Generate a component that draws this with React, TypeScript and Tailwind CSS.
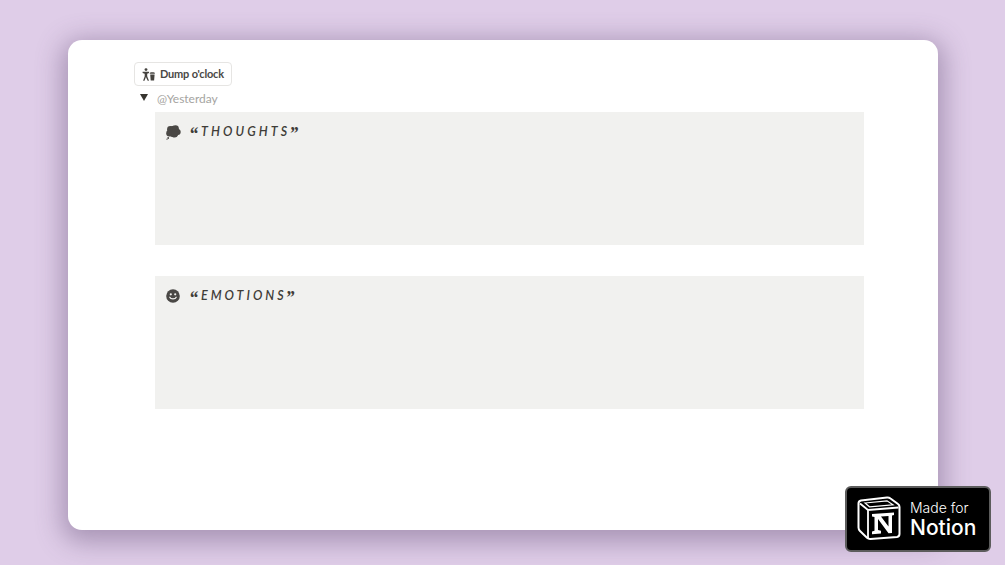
export default function App() {
  return (
    <div className="w-[1005px] h-[565px] overflow-hidden bg-[#dfcde8] relative pt-10 pl-[68px]">
      <div className="w-[870px] h-[490px] bg-white rounded-[14px] shadow-[0_6px_26px_6px_rgba(90,70,110,0.42)] pt-[22px] pl-[66px] font-['Lato',sans-serif]">
        <div className="w-[98px] h-[24px] border border-[#e6e5e3] rounded-[4px] flex items-center pl-[7px] gap-[4px]">
          <svg width="14" height="13" viewBox="0 0 14 13" fill="#45433f">
            <circle cx="4" cy="1.600" r="1.400" />
            <path d="M.6 3.800h6.400v1.200L5.200 5.700v2.500L7 12.800H5.700L3.900 9 2.500 12.800H1.100L2.700 8.200V5.700L.6 5z" />
            <path d="M7.800 4.800l1.400-.6h2.200l1.400.6v1H7.800zM8.200 6.500h4.400l-.5 6H8.700z" />
          </svg>
          <span className="text-[11px] font-bold text-[#4a4845] leading-none -mt-px tracking-[-0.2px] whitespace-nowrap">Dump o'clock</span>
        </div>
        <div className="flex items-center h-[26px] pl-[6px]">
          <svg width="8" height="7" viewBox="0 0 8 7" fill="#37352f" className="-mt-[3px]"><path d="M0 0h8L4 7z" /></svg>
          <span className="ml-[9px] -mt-px text-[12px] text-[#a5a4a1] leading-none">@Yesterday</span>
        </div>
        <div className="ml-[21px] w-[709px] flex flex-col gap-[30px]">
          <Callout title="THOUGHTS" tracking="tracking-[3.100px]" icon={
            <svg width="15" height="15" viewBox="0 0 15 15" fill="#4a4845" className="shrink-0">
              <circle cx="7.500" cy="6.500" r="5.800" />
              <circle cx="4.300" cy="4.200" r="3.200" />
              <circle cx="9.500" cy="3.600" r="3.300" />
              <circle cx="11.700" cy="7" r="3" />
              <circle cx="3.400" cy="8.300" r="3.200" />
              <circle cx="8.500" cy="9.300" r="3.300" />
              <circle cx="2.200" cy="13" r=".9" />
              <circle cx="1" cy="14.200" r=".6" />
            </svg>
          } />
          <Callout title="EMOTIONS" tracking="tracking-[3px]" icon={
            <svg width="14" height="14" viewBox="0 0 14 14" className="shrink-0">
              <circle cx="7" cy="7" r="6.800" fill="#4a4845" />
              <circle cx="4.800" cy="5.300" r="1.100" fill="#f1f1ef" />
              <circle cx="9.200" cy="5.300" r="1.100" fill="#f1f1ef" />
              <path d="M3.800 8.200c.8 2.300 5.600 2.300 6.400 0" fill="none" stroke="#f1f1ef" strokeWidth="1.200" strokeLinecap="round" />
            </svg>
          } />
        </div>
      </div>
      <div className="absolute left-[845px] top-[486px] w-[146px] h-[66px] bg-black rounded-[6px] border-2 border-[#5c5c5c] flex items-center pl-[10px] text-white font-['Inter',sans-serif]">
        <svg width="44" height="45" viewBox="0 0 44 45" fill="none" className="-mt-[1px]">
          <path d="M1.500 7.500 Q1.500 5 4 4.500 L30 1.500 Q32 1.300 33.500 2.500 L41 8 Q42.500 9 42.500 11 V38 Q42.500 40.500 40 41 L13.500 43 Q11.500 43.200 10 41.800 L3 35 Q1.500 33.500 1.500 31.500 Z" fill="black" stroke="white" strokeWidth="2" strokeLinejoin="round" />
          <path d="M3 7.500 L11 14 L41.500 11.500 M11 14 V42" stroke="white" strokeWidth="1.800" />
          <path d="M8 7 L30 4.800 L36 8.800 L12.500 10.800 Z" fill="black" stroke="white" strokeWidth="1.200" />
          <path d="M15 18 L37 16.500 V19 L35 19.500 V37 L31.500 37.300 L21 23 V34 L24 34.800 V37.600 L15 38.200 V35.500 L17.500 34.800 V21 L15 20.600 Z M31.500 20 V30.500 L24 20.500 Z" fill="white" fillRule="evenodd" />
        </svg>
        <div className="ml-[9px] flex flex-col">
          <span className="text-[14px] leading-[17px] font-light">Made for</span>
          <span className="text-[21px] leading-[24px] font-medium">Notion</span>
        </div>
      </div>
    </div>
  );
}

function Callout({ title, icon, tracking }: { title: string; icon: React.ReactNode; tracking: string }) {
  return (
    <div className="h-[133px] mb-px bg-[#f1f1ef] flex items-start pt-[13px] pl-[10px]">
      <div className="w-[16px] h-[14px] flex items-center justify-center">{icon}</div>
      <span className="ml-[8px] flex items-center text-[12.5px] leading-[14px] italic text-[#3f3d38] whitespace-nowrap">
        <span className="font-['Liberation_Serif',serif] font-bold text-[18px] leading-none h-[14px] mr-[3px]">“</span>
        <span className={`font-semibold ${tracking}`}>{title}</span>
        <span className="font-['Liberation_Serif',serif] font-bold text-[18px] leading-none h-[14px] ml-[-1px]">”</span>
      </span>
    </div>
  );
}
